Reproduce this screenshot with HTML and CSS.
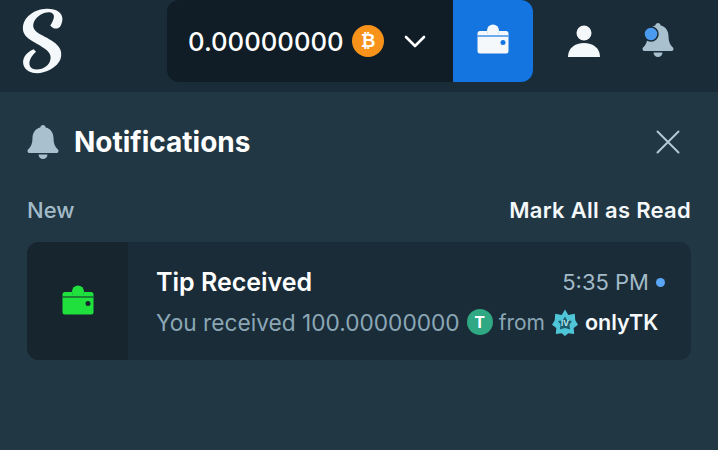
FILE: index.html
```html
<!DOCTYPE html>
<html lang="en">
<head>
    <meta charset="UTF-8">
    <meta name="viewport" content="width=device-width, initial-scale=1.0">
    <title>Notifications</title>
    <link rel="stylesheet" href="styles.css">
</head>
<body>

    <header class="topbar">
        <svg class="logo" viewBox="60 18 135 212" aria-label="Logo">
            <path d="M190 55C190 35 170 22 140 23C100 25 66 50 66 85C66 115 100 125 130 145C150 158 158 170 150 190C140 212 110 218 95 210C82 203 82 180 107 158L100 150C75 160 62 180 68 200C75 222 105 230 130 222C165 212 190 190 186 160C182 130 140 115 115 100C100 90 93 78 103 60C113 42 140 30 155 35C168 40 165 55 152 75C160 88 180 88 185 75C188 68 190 62 190 55Z" fill="#f4f8fa"/>
        </svg>

        <div class="wallet">
            <div class="balance">
                <span class="amount">0.00000000</span>
                <span class="coin-btc">₿</span>
                <svg class="chevron" viewBox="0 0 22 14"><path d="M2 3l9 9 9-9" fill="none" stroke="#fff" stroke-width="2.600" stroke-linecap="round" stroke-linejoin="round"/></svg>
            </div>
            <button class="wallet-btn">
                <svg class="wallet-icon" viewBox="0 0 32 30">
                    <use href="#wallet-shape"/>
                </svg>
            </button>
        </div>

        <div class="actions">
            <svg class="user-icon" viewBox="0 0 32 32">
                <circle cx="16" cy="8" r="7.500" fill="#f4f8fa"/>
                <path d="M0 32c0-9 7-14 16-14s16 5 16 14z" fill="#f4f8fa"/>
            </svg>
            <svg class="bell-top" viewBox="0 0 32 34">
                <use href="#bell-shape"/>
                <circle cx="9" cy="11" r="7" fill="#4b9bf0" stroke="#1a2c38" stroke-width="1.500"/>
            </svg>
        </div>
    </header>

    <main class="panel">
        <div class="panel-head">
            <div class="panel-title">
                <svg class="bell" viewBox="0 0 32 34">
                    <use href="#bell-shape"/>
                </svg>
                <h1>Notifications</h1>
            </div>
            <svg class="close" viewBox="0 0 24 24"><path d="M1.500 1.500l21 21M22.500 1.500l-21 21" stroke="#b1c9d3" stroke-width="2" stroke-linecap="round"/></svg>
        </div>

        <div class="list-head">
            <span class="new-label">New</span>
            <span class="mark-read">Mark All as Read</span>
        </div>

        <div class="card">
            <div class="card-icon">
                <svg class="tip-icon" viewBox="0 0 32 30">
                    <use href="#wallet-shape"/>
                </svg>
            </div>
            <div class="card-body">
                <div class="card-row">
                    <span class="card-title">Tip Received</span>
                    <span class="card-time">5:35 PM <i class="dot"></i></span>
                </div>
                <div class="card-row">
                    <span class="card-text">You received 100.00000000
                        <span class="coin-usdt">T</span>
                        <span class="from">from</span>
                        <svg class="vip-star" viewBox="0 0 24 24">
                            <path d="M12 0l3 5 6-1 .5 6L24 14l-4 3 .5 5.500-5.500-.5-3 2.500-3-2.500-5.500.5L4 17l-4-3 2.500-4L3 4l6 1z" fill="#4fc6d8"/>
                            <path d="M12 6.500l2 3.500 4.500.5-2.500 3.500.8 4.500-4.800-1.500-4.800 1.500.8-4.500-2.500-3.500 4.500-.5z" fill="#1c5a6c"/>
                            <text class="star-text" x="12" y="15.500">IV</text>
                        </svg>
                        <b class="username">onlyTK</b>
                    </span>
                </div>
            </div>
        </div>
    </main>

    <svg class="defs" width="0" height="0">
        <symbol id="wallet-shape" viewBox="0 0 32 30">
            <circle cx="16" cy="6.500" r="6" fill="currentColor"/>
            <path d="M3 7h7.500v2.200h11V7H29a2.500 2.500 0 0 1 2.500 2.500V27a2.500 2.500 0 0 1-2.500 2.500H3A2.500 2.500 0 0 1 .5 27V9.500A2.500 2.500 0 0 1 3 7z" fill="currentColor"/>
            <path d="M.5 12h31" stroke="var(--hole)" stroke-width="1.200"/>
            <circle cx="26" cy="18.500" r="2.500" fill="var(--hole)"/>
        </symbol>
        <symbol id="bell-shape" viewBox="0 0 32 34">
            <path d="M16 0c1.400 0 2.500 1 2.700 2.400C24 3.700 26.500 8 26.500 13c0 5.500 1.500 9 4.200 11.200 1.500 1.300.8 3.800-1.500 3.800H2.800C.5 28-.2 25.500 1.300 24.200 4 22 5.500 18.500 5.500 13c0-5 2.500-9.300 7.800-10.600C13.500 1 14.600 0 16 0z" fill="#a9c1ce"/>
            <path d="M11.500 29.500h9c0 2.500-2 4.500-4.500 4.500s-4.500-2-4.500-4.500z" fill="#a9c1ce"/>
        </symbol>
    </svg>

</body>
</html>
```

FILE: styles.css
```css
* {
    margin: 0;
    padding: 0;
    box-sizing: border-box;
    font-family: 'Inter', sans-serif;
}
body {
    width: 718px;
    height: 450px;
    overflow: hidden;
    background: #213743;
}
.defs {
    position: absolute;
}
.topbar {
    display: flex;
    align-items: flex-start;
    height: 92px;
    padding-left: 21px;
    background: #1a2c38;
}
.logo {
    width: 43px;
    height: 68px;
    margin-top: 7px;
}
.wallet {
    display: flex;
    width: 366px;
    height: 82px;
    margin-left: 103px;
    border-radius: 12px;
    overflow: hidden;
    background: #101d26;
}
.balance {
    display: flex;
    align-items: center;
    width: 286px;
    padding-left: 21px;
}
.amount {
    width: 164px;
    color: #fff;
    font-size: 25.700px;
    font-weight: 500;
}
.coin-btc {
    display: flex;
    align-items: center;
    justify-content: center;
    width: 32px;
    height: 32px;
    border-radius: 50%;
    background: #f7931a;
    color: #fff;
    font-family: 'DejaVu Sans', sans-serif;
    font-size: 18px;
    font-weight: 700;
}
.chevron {
    width: 22px;
    height: 14px;
    margin-left: 20px;
}
.wallet-btn {
    display: flex;
    align-items: center;
    justify-content: center;
    width: 80px;
    border: none;
    background: #1475e1;
}
.wallet-icon {
    width: 32px;
    height: 30px;
    margin-top: -4px;
    color: #f4f8fa;
    --hole: #1475e1;
}
.actions {
    display: flex;
    align-items: center;
    height: 82px;
    margin-left: 35px;
    gap: 42px;
}
.user-icon {
    width: 32px;
    height: 32px;
}
.bell-top {
    width: 32px;
    height: 34px;
    margin-top: -2px;
}
.panel {
    padding: 0 27px;
}
.panel-head {
    display: flex;
    align-items: center;
    justify-content: space-between;
    height: 100px;
}
.panel-title {
    display: flex;
    align-items: center;
    gap: 15px;
}
.bell {
    width: 32px;
    height: 34px;
}
.panel-title h1 {
    color: #fff;
    font-size: 28px;
    font-weight: 700;
}
.close {
    width: 24px;
    height: 24px;
    margin-right: 11px;
}
.list-head {
    display: flex;
    align-items: center;
    justify-content: space-between;
    height: 36px;
}
.new-label {
    color: #a3bbc8;
    font-size: 22px;
    font-weight: 500;
}
.mark-read {
    color: #f4f8fa;
    font-size: 22px;
    font-weight: 600;
    letter-spacing: 0.3px;
}
.card {
    display: flex;
    height: 118px;
    margin-top: 14px;
    border-radius: 12px;
    overflow: hidden;
    background: #1a2c38;
}
.card-icon {
    display: flex;
    align-items: center;
    justify-content: center;
    width: 101px;
    background: #17252f;
}
.tip-icon {
    width: 32px;
    height: 30px;
    margin-top: -2px;
    color: #1fe03c;
    --hole: #17252f;
}
.card-body {
    flex: 1;
    padding: 21px 26px 0 28px;
}
.card-row {
    display: flex;
    align-items: center;
    justify-content: space-between;
    height: 38px;
}
.card-row + .card-row {
    margin-top: 2px;
}
.card-title {
    color: #fff;
    font-size: 25px;
    font-weight: 600;
}
.card-time {
    display: flex;
    align-items: center;
    gap: 7px;
    color: #a3bbc8;
    font-size: 22px;
}
.dot {
    width: 9px;
    height: 9px;
    border-radius: 50%;
    background: #58a6f5;
}
.card-text {
    display: flex;
    align-items: center;
    gap: 7px;
    color: #8ba7b6;
    font-size: 22.700px;
    white-space: nowrap;
}
.from {
    margin-left: -1px;
    font-size: 21px;
}
.coin-usdt {
    display: flex;
    align-items: center;
    justify-content: center;
    width: 26px;
    height: 26px;
    border-radius: 50%;
    background: #2fa883;
    color: #fff;
    font-size: 16px;
    font-weight: 700;
}
.vip-star {
    width: 26px;
    height: 27px;
}
.star-text {
    fill: #b8eef5;
    font-size: 7px;
    font-weight: 700;
    text-anchor: middle;
}
.username {
    color: #f4f8fa;
    font-size: 21.500px;
    font-weight: 600;
}
```
